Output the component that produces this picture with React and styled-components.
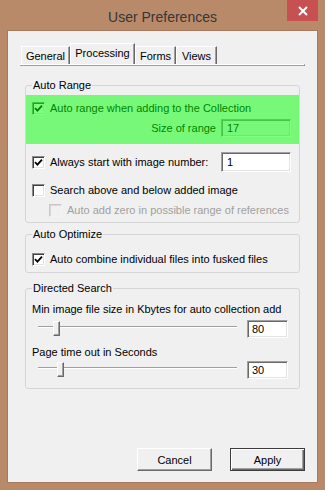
import React from 'react';
import styled, { createGlobalStyle } from 'styled-components';

const Global = createGlobalStyle`
  html, body { margin: 0; padding: 0; background: #b98a6a; }
  body { font-family: "Liberation Sans", Arial, sans-serif; font-size: 11px; color: #000; }
  * { box-sizing: border-box; }
`;

const Window = styled.div`
  width: 325px;
  height: 490px;
  background: #b98a6a;
  display: flex;
  flex-direction: column;
`;

const TitleBar = styled.div`
  height: 30px;
  display: grid;
  grid-template-columns: 1fr auto 1fr;
  align-items: start;
`;

const Title = styled.div`
  grid-column: 2;
  padding-top: 9px;
  font-size: 14px;
  line-height: 16px;
  color: #363636;
`;

const CloseButton = styled.div`
  grid-column: 3;
  justify-self: end;
  margin-right: 7px;
  width: 31px;
  height: 21px;
  background: #c75050;
  display: flex;
  align-items: center;
  justify-content: center;
`;

const Client = styled.div`
  flex: 1;
  margin: 0 7px 7px;
  border: 1px solid #a57a5d;
  background: #f0f0f0;
  display: flex;
  flex-direction: column;
`;

const TabStrip = styled.div`
  margin: 12px 12px 0;
  padding-left: 1px;
  height: 21px;
  display: flex;
  align-items: flex-end;
`;

const Tab = styled.div`
  width: ${p => p.$w}px;
  height: ${p => (p.$active ? 21 : 18)}px;
  display: flex;
  align-items: center;
  justify-content: center;
  padding-bottom: ${p => (p.$active ? 2 : 0)}px;
  background: #f0f0f0;
  border-top: 1px solid #fff;
  border-left: 1px solid #fff;
  border-right: 1px solid #696969;
  box-shadow: inset -1px 0 #a0a0a0;
  font-size: 11px;
  white-space: nowrap;
`;

const TabLine = styled.div`
  margin: 0 12px;
  height: 2px;
  border-top: 1px solid #fff;
  border-bottom: 1px solid #a0a0a0;
  border-right: 1px solid #696969;
`;

const Content = styled.div`
  padding: 0 17px;
  display: flex;
  flex-direction: column;
`;

const GroupBox = styled.fieldset`
  margin: ${p => p.$mt}px 0 0;
  padding: 0 0 ${p => p.$pb}px;
  border: 1px solid #d5d5d5;
  border-radius: 3px;
  min-width: 0;
  display: flex;
  flex-direction: column;
`;

const Legend = styled.legend`
  margin-left: 6px;
  padding: 0 1px;
  font-size: 11px;
  line-height: 13px;
`;

const Highlight = styled.div`
  position: relative;
  margin-top: 3px;
  padding: 7px 8px 7px 6px;
  display: flex;
  flex-direction: column;
  gap: 4px;
  &::after {
    content: '';
    position: absolute;
    inset: 0;
    background: rgba(0, 255, 0, 0.5);
    pointer-events: none;
  }
`;

const Row = styled.div`
  display: flex;
  align-items: center;
  justify-content: ${p => (p.$end ? 'flex-end' : 'flex-start')};
  gap: 5px;
  height: ${p => p.$h}px;
  margin-top: ${p => p.$mt || 0}px;
  padding: 0 ${p => p.$pr || 0}px 0 ${p => p.$pl || 0}px;
  line-height: 13px;
  color: ${p => (p.$disabled ? '#a0a0a0' : 'inherit')};
  white-space: nowrap;
`;

const Spacer = styled.div`
  flex: 1;
`;

const Box = styled.span`
  width: 13px;
  height: 13px;
  flex: none;
  display: flex;
  align-items: center;
  justify-content: center;
  background: ${p => (p.$disabled ? '#f0f0f0' : '#fff')};
  border: 1px solid;
  border-color: ${p => (p.$disabled ? '#c8c8c8 #f4f4f4 #f4f4f4 #c8c8c8' : '#8a8a8a #fff #fff #8a8a8a')};
  box-shadow: ${p => (p.$disabled ? 'inset 1px 1px #d8d8d8' : 'inset 1px 1px #404040, inset -1px -1px #e3e3e3')};
`;

const Field = styled.input`
  width: ${p => p.$w}px;
  height: ${p => p.$h}px;
  flex: none;
  margin: 0;
  padding: 0 0 0 ${p => p.$pad || 5}px;
  font-family: "Liberation Sans", Arial, sans-serif;
  font-size: 11px;
  color: #000;
  outline: none;
  background: ${p => (p.$flat ? '#f0f0f0' : '#fff')};
  border: 1px solid;
  border-color: #a0a0a0 #fff #fff #a0a0a0;
  box-shadow: ${p => (p.$flat ? 'inset 1px 1px #8c8c8c, inset -1px -1px #d6d6d6' : 'inset 1px 1px #696969, inset -1px -1px #e3e3e3')};
`;

const Caption = styled.div`
  margin-top: ${p => p.$mt}px;
  padding-left: 6px;
  line-height: 13px;
  white-space: nowrap;
`;

const SliderRow = styled.div`
  display: flex;
  align-items: center;
  gap: 10px;
  height: 18px;
  margin-top: ${p => p.$mt}px;
  padding: 0 11px 0 12px;
`;

const Track = styled.div`
  flex: 1;
  height: 18px;
  position: relative;
  padding-top: ${p => p.$line}px;
`;

const TrackLine = styled.div`
  height: 2px;
  border-top: 1px solid #a0a0a0;
  border-bottom: 1px solid #fff;
`;

const Thumb = styled.div`
  position: absolute;
  top: ${p => p.$top}px;
  width: 7px;
  height: 15px;
  background: #f0f0f0;
  border: 1px solid;
  border-color: #fff #696969 #696969 #fff;
  box-shadow: inset -1px -1px #a0a0a0;
`;

const ButtonBar = styled.div`
  margin-top: auto;
  display: flex;
  justify-content: flex-end;
  gap: 18px;
  padding: 0 12px 11px 0;
`;

const Button = styled.button`
  width: 75px;
  height: 23px;
  margin: 0;
  padding: 0;
  font-family: "Liberation Sans", Arial, sans-serif;
  font-size: 11px;
  color: #000;
  background: #f0f0f0;
  border: 1px solid;
  border-color: ${p => (p.$default ? '#3c3c3c' : '#fff #696969 #696969 #fff')};
  box-shadow: ${p =>
    p.$default
      ? 'inset 1px 1px #fff, inset -1px -1px #696969, inset -2px -2px #a0a0a0'
      : 'inset -1px -1px #a0a0a0'};
`;

function Check({ checked, disabled }) {
  return (
    <Box $disabled={disabled}>
      {checked && (
        <svg width="9" height="9" viewBox="0 0 9 9">
          <path d="M1 4.2 L3.4 6.6 L8 1.6" fill="none" stroke="#000" strokeWidth="1.8" />
        </svg>
      )}
    </Box>
  );
}

function Slider({ value, max }) {
  const left = Math.round((value / max) * 192);
  return (
    <Track $line={6}>
      <TrackLine />
      <Thumb $top={1} style={{ left }} />
    </Track>
  );
}

export default function App() {
  return (
    <>
      <Global />
      <Window>
        <TitleBar>
          <Title>User Preferences</Title>
          <CloseButton>
            <svg width="10" height="10" viewBox="0 0 10 10">
              <path d="M1 1 L9 9 M9 1 L1 9" stroke="#fff" strokeWidth="2" />
            </svg>
          </CloseButton>
        </TitleBar>
        <Client>
          <TabStrip>
            <Tab $w={49}>General</Tab>
            <Tab $w={65} $active>Processing</Tab>
            <Tab $w={41}>Forms</Tab>
            <Tab $w={41}>Views</Tab>
          </TabStrip>
          <TabLine />
          <Content>
            <GroupBox $mt={13} $pb={5}>
              <Legend>Auto Range</Legend>
              <Highlight>
                <Row $h={13}>
                  <Check checked />
                  <span>Auto range when adding to the Collection</span>
                </Row>
                <Row $h={18} $end>
                  <span>Size of range</span>
                  <Field $w={70} $h={18} $flat readOnly value="17" />
                </Row>
              </Highlight>
              <Row $h={20} $mt={8} $pl={6} $pr={8}>
                <Check checked />
                <span>Always start with image number:</span>
                <Spacer />
                <Field $w={70} $h={20} readOnly value="1" />
              </Row>
              <Row $h={13} $mt={12} $pl={6}>
                <Check />
                <span>Search above and below added image</span>
              </Row>
              <Row $h={13} $mt={7} $pl={23} $disabled>
                <Check disabled />
                <span>Auto add zero in possible range of references</span>
              </Row>
            </GroupBox>

            <GroupBox $mt={5} $pb={6}>
              <Legend>Auto Optimize</Legend>
              <Row $h={13} $mt={12} $pl={6}>
                <Check checked />
                <span>Auto combine individual files into fusked files</span>
              </Row>
            </GroupBox>

            <GroupBox $mt={9} $pb={9}>
              <Legend>Directed Search</Legend>
              <Caption $mt={8}>Min image file size in Kbytes for auto collection add</Caption>
              <SliderRow $mt={4}>
                <Slider value={80} max={1000} />
                <Field $w={41} $h={18} $pad={4} readOnly value="80" />
              </SliderRow>
              <Caption $mt={8}>Page time out in Seconds</Caption>
              <SliderRow $mt={2}>
                <Slider value={30} max={300} />
                <Field $w={41} $h={18} $pad={4} readOnly value="30" />
              </SliderRow>
            </GroupBox>
          </Content>
          <ButtonBar>
            <Button>Cancel</Button>
            <Button $default>Apply</Button>
          </ButtonBar>
        </Client>
      </Window>
    </>
  );
}
